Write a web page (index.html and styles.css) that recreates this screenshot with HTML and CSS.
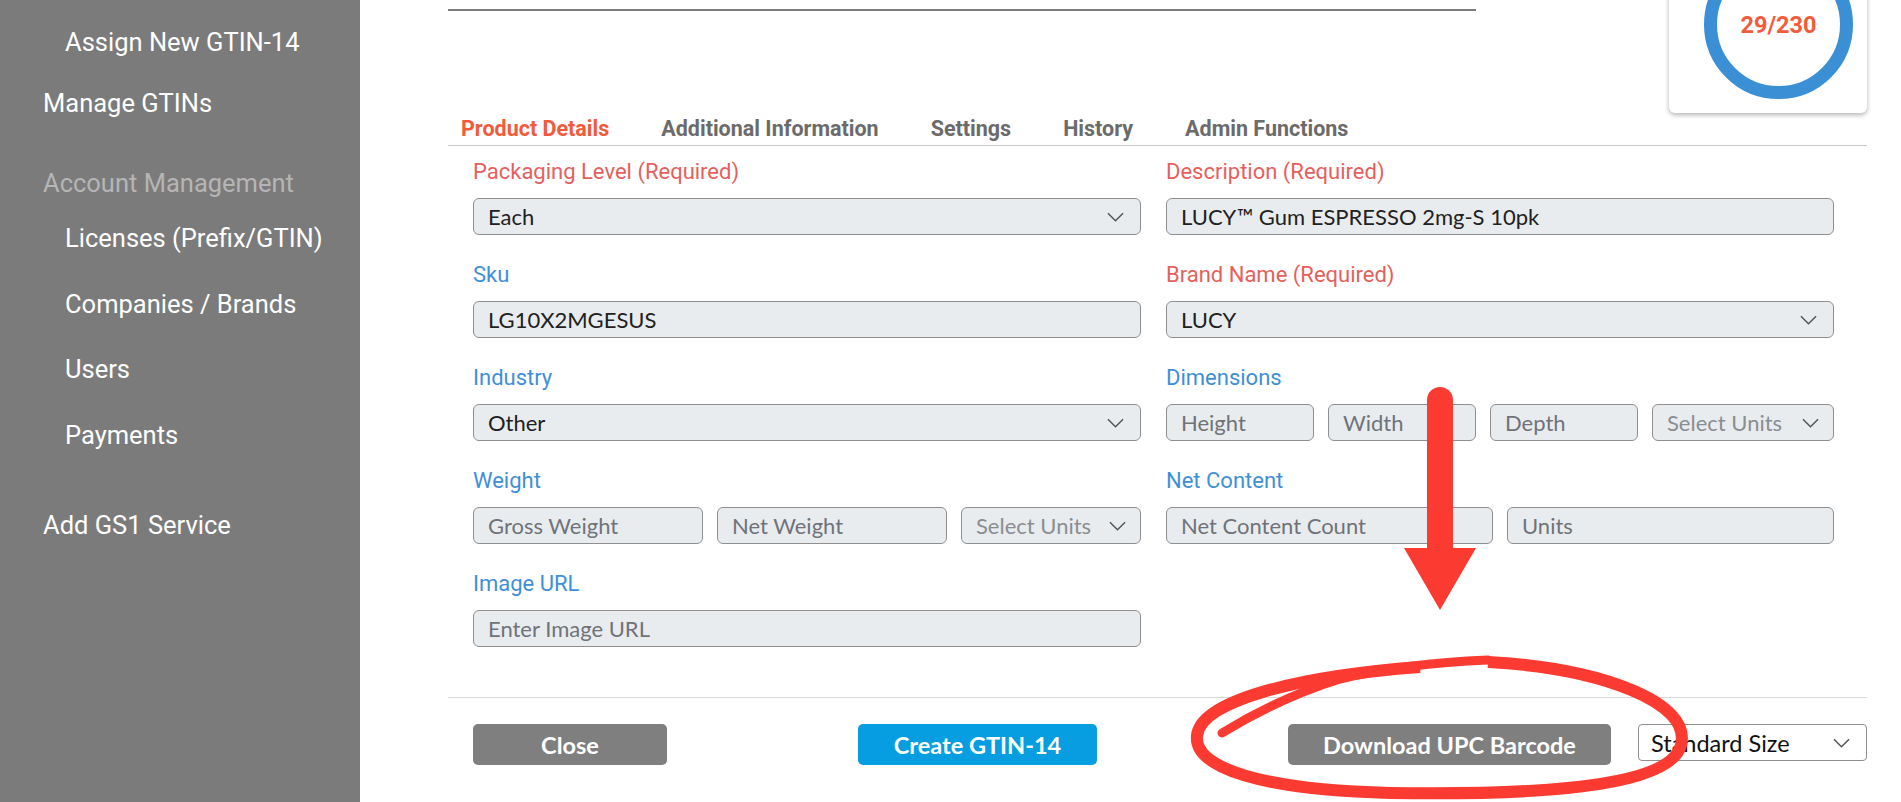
FILE: index.html
```html
<!DOCTYPE html>
<html lang="en">
<head>
    <meta charset="UTF-8">
    <meta name="viewport" content="width=device-width, initial-scale=1.0">
    <title>Edit GTIN</title>
    <link rel="stylesheet" href="styles.css">
</head>
<body>

    <div class="layout">
        <nav class="sidebar">
            <ul class="nav">
                <li class="nav-sub nav-first">Assign New GTIN-14</li>
                <li class="nav-top nav-group-end">Manage GTINs</li>
                <li class="nav-heading">Account Management</li>
                <li class="nav-sub">Licenses (Prefix/GTIN)</li>
                <li class="nav-sub">Companies / Brands</li>
                <li class="nav-sub">Users</li>
                <li class="nav-sub nav-last-sub">Payments</li>
                <li class="nav-top">Add GS1 Service</li>
            </ul>
        </nav>

        <main class="content">
            <div class="header">
                <div class="title-bar"></div>
                <div class="counter-card">
                    <div class="counter-ring">29/230</div>
                </div>
            </div>

            <ul class="tabs">
                <li class="tab tab-active">Product Details</li>
                <li class="tab">Additional Information</li>
                <li class="tab">Settings</li>
                <li class="tab">History</li>
                <li class="tab">Admin Functions</li>
            </ul>

            <form class="product-form">
                <div class="form-col">
                    <div class="field">
                        <label class="field-label required">Packaging Level (Required)</label>
                        <div class="control select">
                            <span>Each</span>
                            <svg class="chevron" viewBox="0 0 18 10"><path d="M1 1l8 8 8-8"/></svg>
                        </div>
                    </div>
                    <div class="field">
                        <label class="field-label">Sku</label>
                        <input class="control" type="text" value="LG10X2MGESUS">
                    </div>
                    <div class="field">
                        <label class="field-label">Industry</label>
                        <div class="control select">
                            <span>Other</span>
                            <svg class="chevron" viewBox="0 0 18 10"><path d="M1 1l8 8 8-8"/></svg>
                        </div>
                    </div>
                    <div class="field">
                        <label class="field-label">Weight</label>
                        <div class="split split-weight">
                            <input class="control" type="text" placeholder="Gross Weight">
                            <input class="control" type="text" placeholder="Net Weight">
                            <div class="control select select-muted">
                                <span>Select Units</span>
                                <svg class="chevron" viewBox="0 0 18 10"><path d="M1 1l8 8 8-8"/></svg>
                            </div>
                        </div>
                    </div>
                    <div class="field">
                        <label class="field-label">Image URL</label>
                        <input class="control" type="text" placeholder="Enter Image URL">
                    </div>
                </div>

                <div class="form-col">
                    <div class="field">
                        <label class="field-label required">Description (Required)</label>
                        <input class="control" type="text" value="LUCY™ Gum ESPRESSO 2mg-S 10pk">
                    </div>
                    <div class="field">
                        <label class="field-label required">Brand Name (Required)</label>
                        <div class="control select">
                            <span>LUCY</span>
                            <svg class="chevron" viewBox="0 0 18 10"><path d="M1 1l8 8 8-8"/></svg>
                        </div>
                    </div>
                    <div class="field">
                        <label class="field-label">Dimensions</label>
                        <div class="split split-dims">
                            <input class="control" type="text" placeholder="Height">
                            <input class="control" type="text" placeholder="Width">
                            <input class="control" type="text" placeholder="Depth">
                            <div class="control select select-muted">
                                <span>Select Units</span>
                                <svg class="chevron" viewBox="0 0 18 10"><path d="M1 1l8 8 8-8"/></svg>
                            </div>
                        </div>
                    </div>
                    <div class="field">
                        <label class="field-label">Net Content</label>
                        <div class="split split-half">
                            <input class="control" type="text" placeholder="Net Content Count">
                            <input class="control" type="text" placeholder="Units">
                        </div>
                    </div>
                </div>
            </form>

            <div class="form-divider"></div>

            <div class="form-footer">
                <button class="btn btn-close" type="button">Close</button>
                <button class="btn btn-create" type="button">Create GTIN-14</button>
                <div class="footer-right">
                    <button class="btn btn-download" type="button">Download UPC Barcode</button>
                    <div class="size-select">
                        <span>Standard Size</span>
                        <svg class="chevron" viewBox="0 0 18 10"><path d="M1 1l8 8 8-8"/></svg>
                    </div>
                </div>
            </div>
        </main>

        <!-- red markup drawn over the screen -->
        <svg class="annotation" viewBox="0 0 1901 802">
            <line class="mark" x1="1440" y1="400" x2="1440" y2="556" stroke-width="26" stroke-linecap="round"/>
            <polygon class="mark-fill" points="1404,548 1476,548 1440,610"/>
            <path class="mark" stroke-width="12" d="M1488 662 C1600 668 1692 702 1681 745 C1670 790 1520 795 1390 793 C1262 790 1194 768 1197 736 C1200 700 1300 676 1420 667"/>
            <path class="mark" stroke-width="9" stroke-linecap="round" d="M1222 733 C1258 711 1298 692 1340 679 C1390 667 1440 662 1488 660"/>
        </svg>
    </div>

</body>
</html>
```

FILE: styles.css
```css
/* Basic styling */
body {
    margin: 0;
    font-family: Roboto, "Noto Sans", Arial, sans-serif;
    background-color: #ffffff;
    overflow: hidden;
}

.layout {
    position: relative;
    display: flex;
    height: 802px;
}

/* Sidebar */
.sidebar {
    width: 360px;
    flex: none;
    background-color: #7b7b7b;
    padding-top: 27px;
    box-sizing: border-box;
}

.nav {
    list-style: none;
    margin: 0;
    padding: 0;
}

.nav li {
    font-size: 25.5px;
    line-height: 30px;
    color: #ffffff;
    margin-bottom: 35.5px;
    white-space: nowrap;
}

.nav-top {
    padding-left: 43px;
}

.nav-sub {
    padding-left: 65px;
}

.nav .nav-heading {
    padding-left: 43px;
    color: #b5b5b5;
    margin-bottom: 25px;
}

.nav .nav-first {
    margin-bottom: 31px;
}

.nav .nav-group-end {
    margin-bottom: 50px;
}

.nav .nav-last-sub {
    margin-bottom: 60px;
}

/* Main content */
.content {
    flex: 1;
    min-width: 0;
    padding: 0 34px 0 88px;
}

.header {
    display: flex;
    justify-content: space-between;
    align-items: flex-start;
    margin-top: -77px;
}

.title-bar {
    width: 1028px;
    height: 86px;
    border-bottom: 2px solid #7d7d7d;
}

.counter-card {
    width: 198px;
    height: 190px;
    box-sizing: border-box;
    padding: 27px 0 0 35px;
    background-color: #ffffff;
    border-radius: 6px;
    box-shadow: 0 2px 5px rgba(0, 0, 0, 0.3);
}

.counter-ring {
    width: 149px;
    height: 149px;
    box-sizing: border-box;
    border: 13px solid #3a8fd5;
    border-radius: 50%;
    display: flex;
    justify-content: center;
    align-items: center;
    font-size: 23.5px;
    font-weight: 700;
    color: #f25c3b;
}

/* Tabs */
.tabs {
    display: flex;
    gap: 52px;
    list-style: none;
    margin: 4px 0 0;
    padding: 0 0 4px 13px;
    border-bottom: 1px solid #c9c9c9;
}

.tab {
    font-size: 21.5px;
    line-height: 24px;
    font-weight: 700;
    color: #6b6b6b;
}

.tab-active {
    color: #f35a3b;
}

/* Form */
.product-form {
    display: grid;
    grid-template-columns: 668px 668px;
    column-gap: 25px;
    align-items: start;
    padding: 14px 0 0 25px;
}

.form-col {
    display: flex;
    flex-direction: column;
    gap: 28px;
}

.field-label {
    display: block;
    font-size: 22px;
    line-height: 24px;
    margin-bottom: 14px;
    color: #3f8fd8;
}

.field-label.required {
    color: #e55f5d;
}

.control {
    display: block;
    width: 100%;
    height: 37px;
    box-sizing: border-box;
    margin: 0;
    padding: 0 14px;
    border: 1px solid #8f8f8f;
    border-radius: 6px;
    background-color: #e9ecef;
    font-family: Lato, "Liberation Sans", sans-serif;
    font-size: 22px;
    color: #212121;
    outline: none;
}

.control::placeholder {
    color: #6f7378;
    opacity: 1;
}

.select {
    display: flex;
    align-items: center;
    justify-content: space-between;
    padding-right: 16px;
    white-space: nowrap;
}

.select-muted {
    color: #8a8d91;
    padding-right: 14px;
}

.chevron {
    width: 17px;
    height: 10px;
    flex: none;
    fill: none;
    stroke: #555555;
    stroke-width: 1.6;
}

.split {
    display: grid;
    column-gap: 14px;
}

.split-weight {
    grid-template-columns: 230px 230px 1fr;
}

.split-dims {
    grid-template-columns: 148px 148px 148px 1fr;
}

.split-half {
    grid-template-columns: 1fr 1fr;
}

.form-divider {
    margin-top: 50px;
    border-top: 1px solid #d8d8d8;
}

/* Footer buttons */
.form-footer {
    display: flex;
    justify-content: space-between;
    align-items: flex-start;
    padding: 26px 0 0 25px;
}

.btn {
    height: 41px;
    border: none;
    border-radius: 5px;
    color: #ffffff;
    font-family: Lato, "Liberation Sans", sans-serif;
    font-size: 23.5px;
    font-weight: 700;
    cursor: pointer;
}

.btn-close {
    width: 194px;
    background-color: #7f7f7f;
}

.btn-create {
    width: 239px;
    background-color: #069ee0;
}

.btn-download {
    width: 323px;
    background-color: #7f7f7f;
}

.footer-right {
    display: flex;
    align-items: flex-start;
    gap: 27px;
}

.size-select {
    width: 229px;
    height: 37px;
    box-sizing: border-box;
    display: flex;
    align-items: center;
    justify-content: space-between;
    padding: 0 16px 0 12px;
    border: 1px solid #8f8f8f;
    border-radius: 4px;
    background-color: #ffffff;
    font-family: Lato, "Liberation Sans", sans-serif;
    font-size: 23.5px;
    color: #111111;
}

/* Red markup */
.annotation {
    position: absolute;
    top: 0;
    left: 0;
    width: 1901px;
    height: 802px;
    pointer-events: none;
}

.mark {
    fill: none;
    stroke: #fb3a32;
}

.mark-fill {
    fill: #fb3a32;
}
```
